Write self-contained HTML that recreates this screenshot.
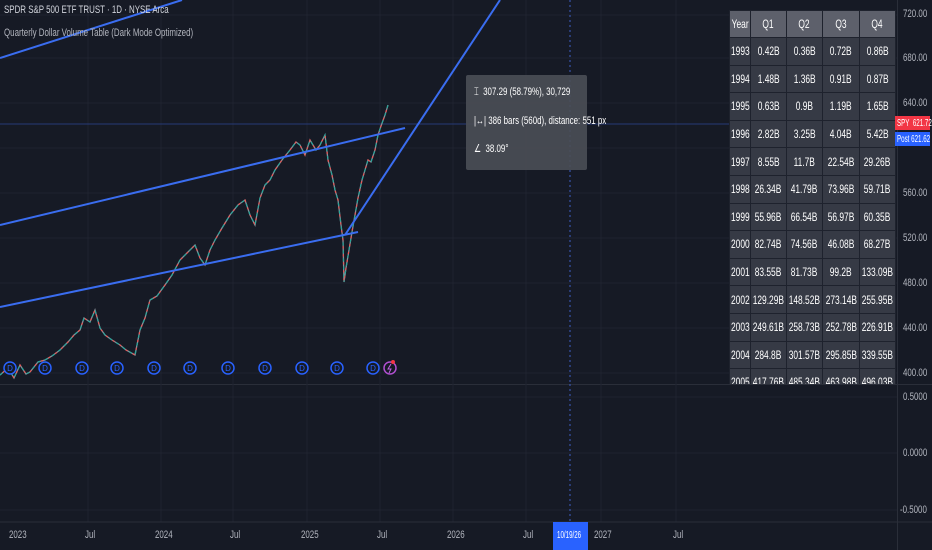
<!DOCTYPE html>
<html><head><meta charset="utf-8"><style>
*{margin:0;padding:0;box-sizing:border-box}
body{width:932px;height:550px;background:#161a25;overflow:hidden;position:relative;font-family:"Liberation Sans",sans-serif;color:#d1d4dc}
.t{position:absolute;font-size:11px;color:#b2b5be;transform:scaleX(.72);transform-origin:left top;white-space:nowrap}
.s{position:absolute;font-size:10px;color:#fff;transform:scaleX(.62);transform-origin:left top;white-space:nowrap}
table{position:absolute;left:729px;top:10px;border-collapse:collapse;table-layout:fixed;width:166px;font-size:12px;color:#fff}
td{height:27.6px;text-align:center;background:#363a45;border:1px solid #1e222d;padding:0;overflow:visible;white-space:nowrap}
tr:first-child td{background:#5d606b;height:27px}
.c{display:inline-block;transform:scaleX(.7);margin:0 -20px}
</style></head><body>
<svg width="932" height="550" style="position:absolute;left:0;top:0">
<g stroke="#1f2330" stroke-width="1">
<line x1="0" y1="15" x2="897" y2="15"/><line x1="0" y1="58" x2="897" y2="58"/><line x1="0" y1="103" x2="897" y2="103"/><line x1="0" y1="148" x2="897" y2="148"/><line x1="0" y1="193" x2="897" y2="193"/><line x1="0" y1="238" x2="897" y2="238"/><line x1="0" y1="283" x2="897" y2="283"/><line x1="0" y1="328" x2="897" y2="328"/><line x1="0" y1="373" x2="897" y2="373"/>
<line x1="88" y1="0" x2="88" y2="522"/><line x1="161" y1="0" x2="161" y2="522"/><line x1="233" y1="0" x2="233" y2="522"/><line x1="307" y1="0" x2="307" y2="522"/><line x1="380" y1="0" x2="380" y2="522"/><line x1="453" y1="0" x2="453" y2="522"/><line x1="526" y1="0" x2="526" y2="522"/><line x1="601" y1="0" x2="601" y2="522"/><line x1="676" y1="0" x2="676" y2="522"/>
</g>
<line x1="0" y1="124" x2="897" y2="124" stroke="#263a78" stroke-width="1"/>
<line x1="570" y1="0" x2="570" y2="522" stroke="#3d5fc4" stroke-dasharray="2,3"/>
<polyline fill="none" stroke="#8a8f98" stroke-width="1.3" points="0,375 8,368 14,378 20,365 26,374 30,372 38,362 45,360 52,356 60,350 68,342 74,335 80,330 84,318 90,322 95,310 100,328 105,335 112,340 120,345 126,350 135,355 140,330 145,318 150,300 157,296 165,285 172,275 180,260 188,252 195,245 200,258 205,265 210,250 215,240 222,228 230,215 238,205 245,200 250,215 255,225 260,198 265,185 270,180 275,170 282,160 290,150 296,142 300,145 305,155 310,140 316,150 320,145 325,135 328,160 332,175 335,190 338,200 341,225 343,240 344,282 346,268 349,250 352,232 355,215 358,198 362,180 365,170 368,160 371,162 375,150 378,135 381,126 385,115 388,105"/>
<polyline fill="none" stroke="#26a69a" stroke-width="1.2" stroke-dasharray="3,5" points="0,375 8,368 14,378 20,365 26,374 30,372 38,362 45,360 52,356 60,350 68,342 74,335 80,330 84,318 90,322 95,310 100,328 105,335 112,340 120,345 126,350 135,355 140,330 145,318 150,300 157,296 165,285 172,275 180,260 188,252 195,245 200,258 205,265 210,250 215,240 222,228 230,215 238,205 245,200 250,215 255,225 260,198 265,185 270,180 275,170 282,160 290,150 296,142 300,145 305,155 310,140 316,150 320,145 325,135 328,160 332,175 335,190 338,200 341,225 343,240 344,282 346,268 349,250 352,232 355,215 358,198 362,180 365,170 368,160 371,162 375,150 378,135 381,126 385,115 388,105"/>
<polyline fill="none" stroke="#ef5350" stroke-width="1.2" stroke-dasharray="2,6" stroke-dashoffset="4" points="0,375 8,368 14,378 20,365 26,374 30,372 38,362 45,360 52,356 60,350 68,342 74,335 80,330 84,318 90,322 95,310 100,328 105,335 112,340 120,345 126,350 135,355 140,330 145,318 150,300 157,296 165,285 172,275 180,260 188,252 195,245 200,258 205,265 210,250 215,240 222,228 230,215 238,205 245,200 250,215 255,225 260,198 265,185 270,180 275,170 282,160 290,150 296,142 300,145 305,155 310,140 316,150 320,145 325,135 328,160 332,175 335,190 338,200 341,225 343,240 344,282 346,268 349,250 352,232 355,215 358,198 362,180 365,170 368,160 371,162 375,150 378,135 381,126 385,115 388,105"/>
<g stroke="#3a6df0" stroke-width="2" fill="none">
<line x1="0" y1="58" x2="182" y2="0"/>
<line x1="0" y1="225" x2="405" y2="128"/>
<line x1="0" y1="307" x2="358" y2="232"/>
<line x1="345" y1="235" x2="500" y2="0"/>
</g>
<g stroke="#2962ff" stroke-width="1.5" fill="#161a25">
<circle cx="10" cy="368" r="6"/><circle cx="45" cy="368" r="6"/><circle cx="82" cy="368" r="6"/><circle cx="117" cy="368" r="6"/><circle cx="154" cy="368" r="6"/><circle cx="190" cy="368" r="6"/><circle cx="228" cy="368" r="6"/><circle cx="265" cy="368" r="6"/><circle cx="302" cy="368" r="6"/><circle cx="337" cy="368" r="6"/><circle cx="373" cy="368" r="6"/>
</g>
<g fill="#2962ff" font-size="8" font-family="Liberation Sans" text-anchor="middle">
<text x="10" y="371">D</text><text x="45" y="371">D</text><text x="82" y="371">D</text><text x="117" y="371">D</text><text x="154" y="371">D</text><text x="190" y="371">D</text><text x="228" y="371">D</text><text x="265" y="371">D</text><text x="302" y="371">D</text><text x="337" y="371">D</text><text x="373" y="371">D</text>
</g>
<circle cx="390" cy="368" r="6" stroke="#b04fd0" stroke-width="1.5" fill="#161a25"/>
<path d="M391 364 L388 369 L391 369 L389 373" stroke="#c060e0" fill="none"/>
<circle cx="393" cy="362" r="2" fill="#f23645"/>
<rect x="466" y="75" width="121" height="95" rx="2" fill="#4a4d55" opacity=".92"/>
</svg>
<div class="t" style="left:4px;top:4px;color:#d1d4dc">SPDR S&amp;P 500 ETF TRUST · 1D · NYSE Arca</div>
<div class="t" style="left:4px;top:27px">Quarterly Dollar Volume Table (Dark Mode Optimized)</div>
<div class="t" style="left:474px;top:86px;color:#fff">⌶&nbsp; 307.29 (58.79%), 30,729</div>
<div class="t" style="left:474px;top:115px;color:#fff">|↔| 386 bars (560d), distance: 551 px</div>
<div class="t" style="left:474px;top:142px;color:#fff">∠&nbsp; 38.09°</div>
<table>
<colgroup><col style="width:21px"><col style="width:36px"><col style="width:36px"><col style="width:37px"><col style="width:36px"></colgroup>
<tr><td><span class="c">Year</span></td><td><span class="c">Q1</span></td><td><span class="c">Q2</span></td><td><span class="c">Q3</span></td><td><span class="c">Q4</span></td></tr>
<tr><td><span class="c">1993</span></td><td><span class="c">0.42B</span></td><td><span class="c">0.36B</span></td><td><span class="c">0.72B</span></td><td><span class="c">0.86B</span></td></tr>
<tr><td><span class="c">1994</span></td><td><span class="c">1.48B</span></td><td><span class="c">1.36B</span></td><td><span class="c">0.91B</span></td><td><span class="c">0.87B</span></td></tr>
<tr><td><span class="c">1995</span></td><td><span class="c">0.63B</span></td><td><span class="c">0.9B</span></td><td><span class="c">1.19B</span></td><td><span class="c">1.65B</span></td></tr>
<tr><td><span class="c">1996</span></td><td><span class="c">2.82B</span></td><td><span class="c">3.25B</span></td><td><span class="c">4.04B</span></td><td><span class="c">5.42B</span></td></tr>
<tr><td><span class="c">1997</span></td><td><span class="c">8.55B</span></td><td><span class="c">11.7B</span></td><td><span class="c">22.54B</span></td><td><span class="c">29.26B</span></td></tr>
<tr><td><span class="c">1998</span></td><td><span class="c">26.34B</span></td><td><span class="c">41.79B</span></td><td><span class="c">73.96B</span></td><td><span class="c">59.71B</span></td></tr>
<tr><td><span class="c">1999</span></td><td><span class="c">55.96B</span></td><td><span class="c">66.54B</span></td><td><span class="c">56.97B</span></td><td><span class="c">60.35B</span></td></tr>
<tr><td><span class="c">2000</span></td><td><span class="c">82.74B</span></td><td><span class="c">74.56B</span></td><td><span class="c">46.08B</span></td><td><span class="c">68.27B</span></td></tr>
<tr><td><span class="c">2001</span></td><td><span class="c">83.55B</span></td><td><span class="c">81.73B</span></td><td><span class="c">99.2B</span></td><td><span class="c">133.09B</span></td></tr>
<tr><td><span class="c">2002</span></td><td><span class="c">129.29B</span></td><td><span class="c">148.52B</span></td><td><span class="c">273.14B</span></td><td><span class="c">255.95B</span></td></tr>
<tr><td><span class="c">2003</span></td><td><span class="c">249.61B</span></td><td><span class="c">258.73B</span></td><td><span class="c">252.78B</span></td><td><span class="c">226.91B</span></td></tr>
<tr><td><span class="c">2004</span></td><td><span class="c">284.8B</span></td><td><span class="c">301.57B</span></td><td><span class="c">295.85B</span></td><td><span class="c">339.55B</span></td></tr>
<tr><td><span class="c">2005</span></td><td><span class="c">417.76B</span></td><td><span class="c">485.34B</span></td><td><span class="c">463.98B</span></td><td><span class="c">496.03B</span></td></tr>
</table>
<svg width="932" height="166" style="position:absolute;left:0;top:384px;background:#161a25">
<line x1="0" y1="0" x2="932" y2="0" stroke="#2a2e39" stroke-width="2"/>
<g stroke="#1f2330"><line x1="0" y1="13" x2="897" y2="13"/><line x1="0" y1="69" x2="897" y2="69"/><line x1="0" y1="126" x2="897" y2="126"/>
<line x1="88" y1="0" x2="88" y2="138"/><line x1="161" y1="0" x2="161" y2="138"/><line x1="233" y1="0" x2="233" y2="138"/><line x1="307" y1="0" x2="307" y2="138"/><line x1="380" y1="0" x2="380" y2="138"/><line x1="453" y1="0" x2="453" y2="138"/><line x1="526" y1="0" x2="526" y2="138"/><line x1="601" y1="0" x2="601" y2="138"/><line x1="676" y1="0" x2="676" y2="138"/></g>
<line x1="570" y1="0" x2="570" y2="138" stroke="#3d5fc4" stroke-dasharray="2,3"/>
<line x1="0" y1="138" x2="932" y2="138" stroke="#2a2e39"/>
<rect x="553" y="138" width="35" height="28" fill="#2962ff"/>
</svg>
<div style="position:absolute;left:897px;top:0;width:1px;height:550px;background:#2a2e39"></div>
<div class="t" style="left:903px;top:8px">720.00</div>
<div class="t" style="left:903px;top:52px">680.00</div>
<div class="t" style="left:903px;top:97px">640.00</div>
<div class="t" style="left:903px;top:187px">560.00</div>
<div class="t" style="left:903px;top:232px">520.00</div>
<div class="t" style="left:903px;top:277px">480.00</div>
<div class="t" style="left:903px;top:322px">440.00</div>
<div class="t" style="left:903px;top:367px">400.00</div>
<div class="t" style="left:903px;top:391px">0.5000</div>
<div class="t" style="left:903px;top:447px">0.0000</div>
<div class="t" style="left:900px;top:504px">-0.5000</div>
<div style="position:absolute;left:895px;top:116px;width:35px;height:14px;background:#f23645"></div>
<div class="s" style="left:897px;top:118px">SPY&nbsp;&nbsp;621.72</div>
<div style="position:absolute;left:895px;top:132px;width:35px;height:14px;background:#2962ff"></div>
<div class="s" style="left:897px;top:134px">Post&nbsp;621.62</div>
<div class="t" style="left:9px;top:529px">2023</div>
<div class="t" style="left:85px;top:529px">Jul</div>
<div class="t" style="left:155px;top:529px">2024</div>
<div class="t" style="left:230px;top:529px">Jul</div>
<div class="t" style="left:301px;top:529px">2025</div>
<div class="t" style="left:377px;top:529px">Jul</div>
<div class="t" style="left:447px;top:529px">2026</div>
<div class="t" style="left:523px;top:529px">Jul</div>
<div class="s" style="left:557px;top:530px">10/19/26</div>
<div class="t" style="left:594px;top:529px">2027</div>
<div class="t" style="left:673px;top:529px">Jul</div>
</body></html>
